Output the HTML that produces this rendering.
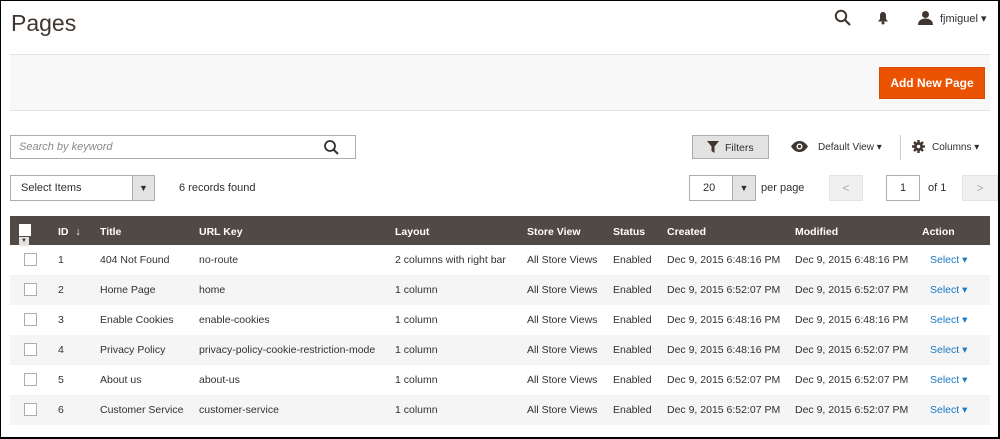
<!DOCTYPE html>
<html><head><meta charset="utf-8"><style>
*{box-sizing:border-box;margin:0;padding:0}
body{width:1000px;height:439px;overflow:hidden;background:#fff;font-family:"Liberation Sans",sans-serif;color:#303030;position:relative}
.frame{position:absolute;inset:0;border:1px solid #000;border-width:1px 2px 2px 1px}
.a{position:absolute;white-space:nowrap}
.t{font-size:10.5px;color:#303030;margin-top:1px}
.th{font-size:10.5px;color:#fff;font-weight:bold;margin-top:1px}
.cb{position:absolute;width:13px;height:13px;border:1px solid #adadad;background:#fff}
.row{position:absolute;left:10px;width:980px;height:30px}
.sel{color:#1979c3;font-size:10.5px;margin-top:1px}
</style></head><body>
<div class="a" style="left:11px;top:10px;font-size:23px;color:#41362f">Pages</div>
<svg class="a" style="left:834px;top:9px" width="18" height="18" viewBox="0 0 18 18"><circle cx="7" cy="7" r="5.2" fill="none" stroke="#41362f" stroke-width="2"/><line x1="11" y1="11" x2="16" y2="16" stroke="#41362f" stroke-width="2.2"/></svg>
<svg class="a" style="left:877px;top:11px" width="12" height="14" viewBox="0 0 12 14"><path d="M6 1C3.5 1 3 3 3 5v3L1 10.5h10L9 8V5c0-2-.5-4-3-4z" fill="#41362f"/><circle cx="6" cy="12" r="1.5" fill="#41362f"/></svg>
<svg class="a" style="left:918px;top:10px" width="15" height="15" viewBox="0 0 15 15"><circle cx="7.5" cy="4.5" r="3.5" fill="#41362f"/><path d="M0 15c0-4 3-6.5 7.5-6.5S15 11 15 15z" fill="#41362f"/></svg>
<div class="a t" style="left:940px;top:11px;font-size:11px">fjmiguel ▾</div>
<div class="a" style="left:10px;top:54px;width:980px;height:57px;background:#f8f8f8;border-top:1px solid #e3e3e3;border-bottom:1px solid #e3e3e3"></div>
<div class="a" style="left:879px;top:67px;width:106px;height:32px;background:#eb5202;border:1px solid #d54b05;color:#fff;font-weight:bold;font-size:12px;line-height:30px;text-align:center">Add New Page</div>
<div class="a" style="left:10px;top:135px;width:346px;height:24px;border:1px solid #adadad"></div>
<div class="a" style="left:19px;top:141px;font-size:11px;font-style:italic;color:#8a8a8a">Search by keyword</div>
<svg class="a" style="left:323px;top:139px" width="17" height="17" viewBox="0 0 17 17"><circle cx="7" cy="7" r="5" fill="none" stroke="#303030" stroke-width="1.8"/><line x1="10.5" y1="10.5" x2="15" y2="15" stroke="#303030" stroke-width="2"/></svg>
<div class="a" style="left:692px;top:135px;width:77px;height:24px;background:#e3e3e3;border:1px solid #adadad"></div>
<svg class="a" style="left:707px;top:141px" width="12" height="12" viewBox="0 0 12 12"><path d="M0 0h12L7.5 5.5V12L4.5 10V5.5z" fill="#41362f"/></svg>
<div class="a t" style="left:725px;top:141px">Filters</div>
<svg class="a" style="left:791px;top:141px" width="17" height="11" viewBox="0 0 17 11"><path d="M0 5.5C3 1 6 0 8.5 0S14 1 17 5.5C14 10 11 11 8.5 11S3 10 0 5.5z" fill="#41362f"/><circle cx="8.5" cy="5.5" r="3" fill="#fff"/><circle cx="8.5" cy="5.5" r="1.6" fill="#41362f"/></svg>
<div class="a t" style="left:818px;top:141px;font-size:10px">Default View ▾</div>
<div class="a" style="left:900px;top:135px;width:1px;height:25px;background:#ccc"></div>
<svg class="a" style="left:912px;top:140px" width="13" height="13" viewBox="0 0 13 13"><circle cx="6.5" cy="6.5" r="4.5" fill="#41362f"/><g stroke="#41362f" stroke-width="2.4"><line x1="6.5" y1="0" x2="6.5" y2="13"/><line x1="0" y1="6.5" x2="13" y2="6.5"/><line x1="2" y1="2" x2="11" y2="11"/><line x1="11" y1="2" x2="2" y2="11"/></g><circle cx="6.5" cy="6.5" r="1.8" fill="#fff"/></svg>
<div class="a t" style="left:932px;top:141px;font-size:10px">Columns ▾</div>
<div class="a" style="left:10px;top:175px;width:145px;height:26px;border:1px solid #adadad"></div>
<div class="a" style="left:132px;top:176px;width:22px;height:24px;background:#e3e3e3;border-left:1px solid #adadad;font-size:9px;text-align:center;line-height:24px">▼</div>
<div class="a t" style="left:21px;top:181px;font-size:11px">Select Items</div>
<div class="a t" style="left:179px;top:181px;font-size:11px">6 records found</div>
<div class="a" style="left:689px;top:175px;width:67px;height:26px;border:1px solid #adadad"></div>
<div class="a" style="left:732px;top:176px;width:23px;height:24px;background:#e3e3e3;border-left:1px solid #adadad;font-size:9px;text-align:center;line-height:24px">▼</div>
<div class="a t" style="left:703px;top:181px;font-size:11px">20</div>
<div class="a t" style="left:761px;top:181px;font-size:11px">per page</div>
<div class="a" style="left:829px;top:175px;width:34px;height:26px;background:#f0f0f0;border:1px solid #e3e3e3;color:#aaa;text-align:center;line-height:24px;font-size:12px">&lt;</div>
<div class="a" style="left:886px;top:175px;width:34px;height:26px;border:1px solid #adadad;text-align:center;line-height:24px;font-size:11px">1</div>
<div class="a t" style="left:928px;top:181px;font-size:11px">of 1</div>
<div class="a" style="left:962px;top:175px;width:36px;height:26px;background:#f0f0f0;border:1px solid #e3e3e3;color:#aaa;text-align:center;line-height:24px;font-size:12px">&gt;</div>
<div class="a" style="left:10px;top:216px;width:980px;height:29px;background:#514943"></div>
<div class="a" style="left:19px;top:224px;width:12px;height:12px;background:#fff"></div>
<div class="a" style="left:19px;top:237px;width:10px;height:9px;background:#e3e3e3;font-size:6px;text-align:center;line-height:9px">▼</div>
<div class="a th" style="left:58px;top:225px">ID <span style="font-weight:normal;margin-left:4px">↓</span></div>
<div class="a th" style="left:100px;top:225px">Title</div>
<div class="a th" style="left:199px;top:225px">URL Key</div>
<div class="a th" style="left:395px;top:225px">Layout</div>
<div class="a th" style="left:527px;top:225px">Store View</div>
<div class="a th" style="left:613px;top:225px">Status</div>
<div class="a th" style="left:667px;top:225px">Created</div>
<div class="a th" style="left:795px;top:225px">Modified</div>
<div class="a th" style="left:922px;top:225px">Action</div>
<div class="row" style="top:275px;background:#f5f5f5"></div>
<div class="row" style="top:335px;background:#f5f5f5"></div>
<div class="row" style="top:395px;background:#f5f5f5"></div>
<div class="cb" style="left:24px;top:253px"></div><div class="a t" style="left:58px;top:253px">1</div><div class="a t" style="left:100px;top:253px">404 Not Found</div><div class="a t" style="left:199px;top:253px">no-route</div><div class="a t" style="left:395px;top:253px">2 columns with right bar</div><div class="a t" style="left:527px;top:253px">All Store Views</div><div class="a t" style="left:613px;top:253px">Enabled</div><div class="a t" style="left:667px;top:253px">Dec 9, 2015 6:48:16 PM</div><div class="a t" style="left:795px;top:253px">Dec 9, 2015 6:48:16 PM</div><div class="a sel" style="left:930px;top:253px">Select ▾</div>
<div class="cb" style="left:24px;top:283px"></div><div class="a t" style="left:58px;top:283px">2</div><div class="a t" style="left:100px;top:283px">Home Page</div><div class="a t" style="left:199px;top:283px">home</div><div class="a t" style="left:395px;top:283px">1 column</div><div class="a t" style="left:527px;top:283px">All Store Views</div><div class="a t" style="left:613px;top:283px">Enabled</div><div class="a t" style="left:667px;top:283px">Dec 9, 2015 6:52:07 PM</div><div class="a t" style="left:795px;top:283px">Dec 9, 2015 6:52:07 PM</div><div class="a sel" style="left:930px;top:283px">Select ▾</div>
<div class="cb" style="left:24px;top:313px"></div><div class="a t" style="left:58px;top:313px">3</div><div class="a t" style="left:100px;top:313px">Enable Cookies</div><div class="a t" style="left:199px;top:313px">enable-cookies</div><div class="a t" style="left:395px;top:313px">1 column</div><div class="a t" style="left:527px;top:313px">All Store Views</div><div class="a t" style="left:613px;top:313px">Enabled</div><div class="a t" style="left:667px;top:313px">Dec 9, 2015 6:48:16 PM</div><div class="a t" style="left:795px;top:313px">Dec 9, 2015 6:48:16 PM</div><div class="a sel" style="left:930px;top:313px">Select ▾</div>
<div class="cb" style="left:24px;top:343px"></div><div class="a t" style="left:58px;top:343px">4</div><div class="a t" style="left:100px;top:343px">Privacy Policy</div><div class="a t" style="left:199px;top:343px">privacy-policy-cookie-restriction-mode</div><div class="a t" style="left:395px;top:343px">1 column</div><div class="a t" style="left:527px;top:343px">All Store Views</div><div class="a t" style="left:613px;top:343px">Enabled</div><div class="a t" style="left:667px;top:343px">Dec 9, 2015 6:48:16 PM</div><div class="a t" style="left:795px;top:343px">Dec 9, 2015 6:52:07 PM</div><div class="a sel" style="left:930px;top:343px">Select ▾</div>
<div class="cb" style="left:24px;top:373px"></div><div class="a t" style="left:58px;top:373px">5</div><div class="a t" style="left:100px;top:373px">About us</div><div class="a t" style="left:199px;top:373px">about-us</div><div class="a t" style="left:395px;top:373px">1 column</div><div class="a t" style="left:527px;top:373px">All Store Views</div><div class="a t" style="left:613px;top:373px">Enabled</div><div class="a t" style="left:667px;top:373px">Dec 9, 2015 6:52:07 PM</div><div class="a t" style="left:795px;top:373px">Dec 9, 2015 6:52:07 PM</div><div class="a sel" style="left:930px;top:373px">Select ▾</div>
<div class="cb" style="left:24px;top:403px"></div><div class="a t" style="left:58px;top:403px">6</div><div class="a t" style="left:100px;top:403px">Customer Service</div><div class="a t" style="left:199px;top:403px">customer-service</div><div class="a t" style="left:395px;top:403px">1 column</div><div class="a t" style="left:527px;top:403px">All Store Views</div><div class="a t" style="left:613px;top:403px">Enabled</div><div class="a t" style="left:667px;top:403px">Dec 9, 2015 6:52:07 PM</div><div class="a t" style="left:795px;top:403px">Dec 9, 2015 6:52:07 PM</div><div class="a sel" style="left:930px;top:403px">Select ▾</div>
<div class="frame"></div>
</body></html>
